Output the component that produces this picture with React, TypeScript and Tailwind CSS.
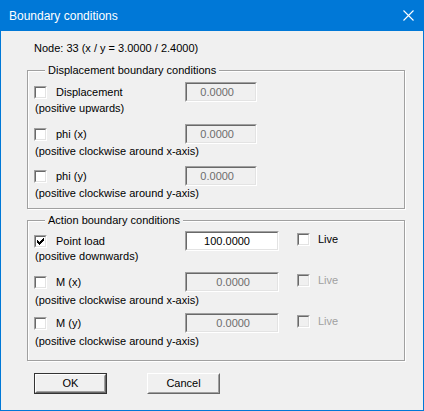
import React from 'react'

// classic 3D sunken frame (checkbox + edit field)
const sunkenOuter = 'border border-t-[#a0a0a0] border-l-[#a0a0a0] border-r-white border-b-white'
const sunkenInner = 'border border-t-[#696969] border-l-[#696969] border-r-[#e3e3e3] border-b-[#e3e3e3]'

function CheckMark() {
  return (
    <svg width="7" height="7" viewBox="0 0 7 7" shapeRendering="crispEdges">
      <path
        d="M0 2h1v3H0zM1 3h1v3H1zM2 4h1v3H2zM3 3h1v3H3zM4 2h1v3H4zM5 1h1v3H5zM6 0h1v3H6z"
        fill="#000"
      />
    </svg>
  )
}

function Check({ checked = false, disabled = false }: { checked?: boolean; disabled?: boolean }) {
  return (
    <span className={`box-border flex h-[13px] w-[13px] shrink-0 ${sunkenOuter}`}>
      <span
        className={`flex flex-1 items-center justify-center ${sunkenInner} ${disabled ? 'bg-[#f0f0f0]' : 'bg-white'}`}
      >
        {checked && <CheckMark />}
      </span>
    </span>
  )
}

function Field({ value, enabled, wide }: { value: string; enabled: boolean; wide: boolean }) {
  return (
    <div className={`box-border flex h-[20px] shrink-0 ${wide ? 'w-[94px]' : 'w-[72px]'} ${sunkenOuter}`}>
      <div
        className={`flex flex-1 items-center justify-end ${sunkenInner} ${wide ? 'pr-[27px]' : 'pr-[21px]'} ${
          enabled ? 'bg-white text-black' : 'bg-[#f0f0f0] text-[#6d6d6d]'
        }`}
      >
        {value}
      </div>
    </div>
  )
}

type ItemProps = {
  label: string
  desc: string
  value: string
  checked?: boolean
  enabled?: boolean
  wide?: boolean
  live?: 'on' | 'off'
  descGap: string
  height: string
}

function Item({ label, desc, value, checked, enabled = false, wide = false, live, descGap, height }: ItemProps) {
  return (
    <div className={`flex flex-col ${height}`}>
      <div className="flex h-[20px] shrink-0 items-center">
        <Check checked={checked} />
        <span className="ml-[9px] w-[129px]">{label}</span>
        <Field value={value} enabled={enabled} wide={wide} />
        {live && (
          <div className="mb-[4px] ml-[18px] flex items-center">
            <Check disabled={live === 'off'} />
            <span className={`ml-[8px] ${live === 'off' ? 'text-[#a0a0a0]' : 'text-black'}`}>Live</span>
          </div>
        )}
      </div>
      <div className={`h-[13px] shrink-0 pl-[1px] ${descGap}`}>{desc}</div>
    </div>
  )
}

function Group({ title, children, className }: { title: string; children: React.ReactNode; className: string }) {
  return (
    <fieldset
      className={`ml-[26px] w-[378px] border border-[#a0a0a0] pl-[6px] shadow-[1px_1px_0_#ffffff,inset_1px_1px_0_#ffffff] ${className}`}
    >
      <legend className="ml-[11px] bg-[#f0f0f0] px-[3px] leading-[13px]">{title}</legend>
      {children}
    </fieldset>
  )
}

function Button({ label, isDefault = false }: { label: string; isDefault?: boolean }) {
  const face = (
    <div className="box-border flex flex-1 border border-t-white border-l-white border-r-[#696969] border-b-[#696969]">
      <div className="flex flex-1 items-center justify-center border border-t-[#f0f0f0] border-l-[#f0f0f0] border-r-[#a0a0a0] border-b-[#a0a0a0] bg-[#f0f0f0]">
        {label}
      </div>
    </div>
  )
  return (
    <div className={`box-border flex h-[21px] w-[73px] ${isDefault ? 'border border-[#333]' : ''}`}>{face}</div>
  )
}

export default function App() {
  return (
    <div className="box-border flex h-[411px] w-[424px] flex-col border-x border-b border-[#0078d7] bg-[#0078d7] font-['Liberation_Sans',Arial,sans-serif] text-[11px] leading-[13px] text-black">
      {/* title bar */}
      <div className="flex h-[31px] shrink-0 items-center justify-between pl-[8px] pr-[9px] text-white">
        <span className="mt-[1px] text-[12px]">Boundary conditions</span>
        <svg width="11" height="11" viewBox="0 0 11 11">
          <path d="M0.5 0.5 L10.5 10.5 M10.5 0.5 L0.5 10.5" stroke="#fff" strokeWidth="1.1" />
        </svg>
      </div>

      <div className="flex flex-1 flex-col bg-[#f0f0f0]">
        <div className="ml-[33px] mt-[11px]">Node: 33 (x / y = 3.0000 / 2.4000)</div>

        <Group title="Displacement boundary conditions" className="mt-[9px] pt-[5px] pb-[9px]">
          <Item label="Displacement" desc="(positive upwards)" value="0.0000" descGap="mt-0" height="h-[42px]" />
          <Item
            label="phi (x)"
            desc="(positive clockwise around x-axis)"
            value="0.0000"
            descGap="mt-[1px]"
            height="h-[42px]"
          />
          <Item
            label="phi (y)"
            desc="(positive clockwise around y-axis)"
            value="0.0000"
            descGap="mt-[1px]"
            height="h-[33px]"
          />
        </Group>

        <Group title="Action boundary conditions" className="mt-[5px] pt-[4px] pb-[12px]">
          <Item
            label="Point load"
            desc="(positive downwards)"
            value="100.0000"
            checked
            enabled
            wide
            live="on"
            descGap="-mt-[1px]"
            height="h-[41px]"
          />
          <Item
            label="M (x)"
            desc="(positive clockwise around x-axis)"
            value="0.0000"
            wide
            live="off"
            descGap="mt-[2px]"
            height="h-[41px]"
          />
          <Item
            label="M (y)"
            desc="(positive clockwise around y-axis)"
            value="0.0000"
            wide
            live="off"
            descGap="mt-[2px]"
            height="h-[35px]"
          />
        </Group>

        <div className="ml-[33px] mt-[12px] flex gap-[40px]">
          <Button label="OK" isDefault />
          <Button label="Cancel" />
        </div>
      </div>
    </div>
  )
}
